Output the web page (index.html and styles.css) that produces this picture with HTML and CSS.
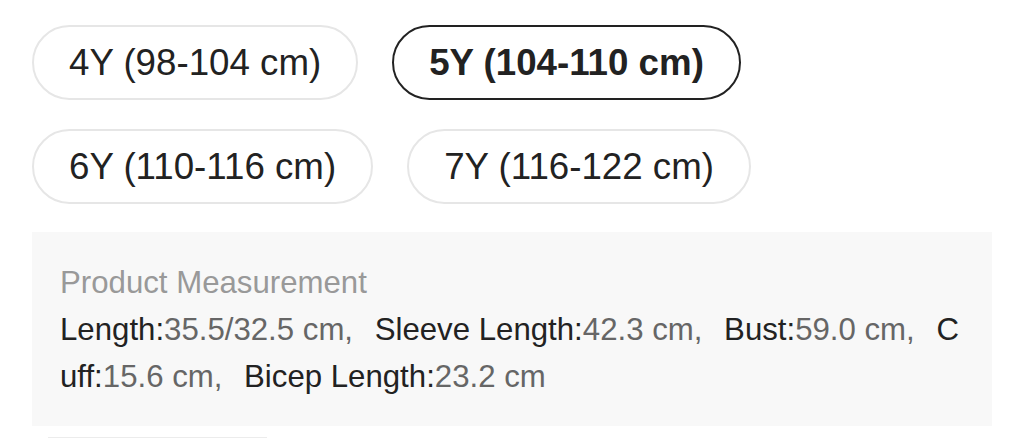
FILE: index.html
```html
<!DOCTYPE html>
<html lang="en">
<head>
<meta charset="utf-8">
<title>Size</title>
<link rel="stylesheet" href="styles.css">
</head>
<body>
<div class="page">
  <div class="sizes">
    <div class="size">4Y (98-104 cm)</div>
    <div class="size selected">5Y (104-110 cm)</div>
    <div class="size">6Y (110-116 cm)</div>
    <div class="size">7Y (116-122 cm)</div>
  </div>
  <div class="measure">
    <div class="title">Product Measurement</div>
    <div class="list"><span class="item"><span class="k">Length:</span><span class="v">35.5/32.5 cm,</span></span> <span class="item"><span class="k">Sleeve Length:</span><span class="v">42.3 cm,</span></span> <span class="item"><span class="k">Bust:</span><span class="v">59.0 cm,</span></span> <span class="item"><span class="k">Cuff:</span><span class="v">15.6 cm,</span></span> <span class="item"><span class="k">Bicep Length:</span><span class="v">23.2 cm</span></span></div>
  </div>
  <div class="next"></div>
</div>
</body>
</html>
```

FILE: styles.css
```css
html, body {
  margin: 0;
  padding: 0;
  background: #fff;
}
body {
  font-family: "Liberation Sans", Arial, sans-serif;
  color: #222;
}
.page {
  padding: 25px 32px 0 32px;
}
.sizes {
  display: flex;
  flex-wrap: wrap;
  column-gap: 34px;
  row-gap: 29px;
  width: 760px;
}
.size {
  box-sizing: border-box;
  height: 75px;
  padding: 0 35px;
  border: 2px solid #e6e6e6;
  border-radius: 38px;
  font-size: 36.7px;
  line-height: 71px;
  color: #222;
  white-space: nowrap;
}
.size.selected {
  border-color: #222;
  font-weight: bold;
}
.measure {
  margin-top: 28px;
  width: 960px;
  box-sizing: border-box;
  padding: 27px 24px 26px 28px;
  background: #f8f8f8;
  font-size: 31.2px;
  line-height: 47px;
}
.title {
  color: #999;
}
.list {
  word-break: break-all;
}
.item {
  margin-right: 13px;
}
.k {
  color: #222;
}
.v {
  color: #666;
}
.next {
  margin: 11px 0 0 16px;
  width: 219px;
  height: 10px;
  border-top: 1px solid #ececec;
}
```
